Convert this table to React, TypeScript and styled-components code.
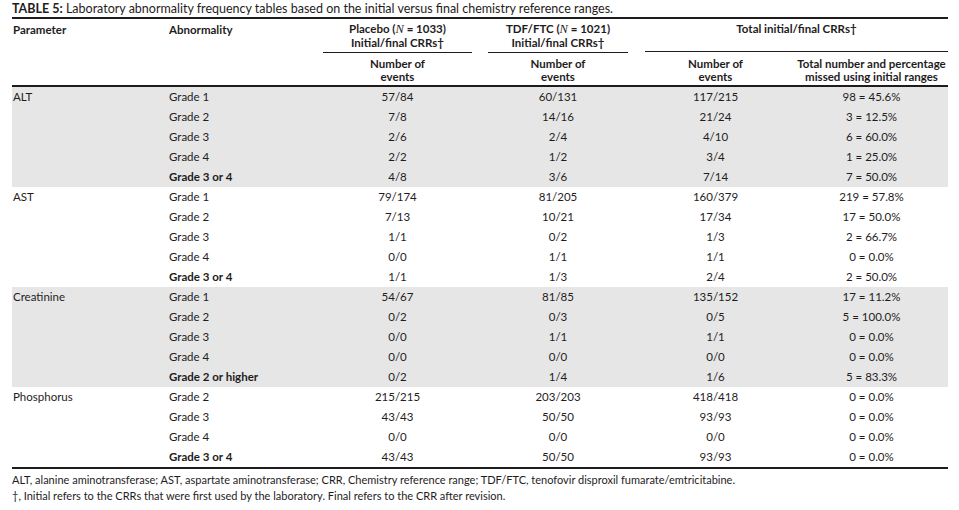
import React from "react";
import styled, { createGlobalStyle } from "styled-components";

const Global = createGlobalStyle`
  html, body { margin: 0; padding: 0; background: #ffffff; }
  body { font-family: Lato, "Open Sans", "Liberation Sans", sans-serif; color: #1f1c1d; }
`;

const COLS = "156px 147px 165px 156px 159px 153px";

const Page = styled.div`
  padding: 1px 11px 0 12px;
  width: 936px;
`;

const Title = styled.div`
  font-size: 12.5px;
  line-height: 15px;
  height: 16px;
  white-space: nowrap;
  b { font-weight: 700; }
`;

const Table = styled.div`
  border-top: 2px solid #1f1c1d;
  border-bottom: 2px solid #1f1c1d;
  font-size: 11.5px;
`;

const Head = styled.div`
  display: grid;
  grid-template-columns: ${COLS};
  grid-template-rows: auto auto;
  border-bottom: 2px solid #1f1c1d;
  font-weight: 700;
  line-height: 13px;
`;

const HeadLabel = styled.div<{ $col: number }>`
  grid-column: ${(p) => p.$col};
  grid-row: 1 / span 2;
  padding: 4px 0 0 1px;
  text-align: left;
`;

const GroupHead = styled.div<{ $col: string; $r?: number }>`
  grid-column: ${(p) => p.$col};
  grid-row: 1;
  padding: 3px ${(p) => p.$r ?? 8}px 0 ${(p) => (p.$r === 0 ? 9 : 8)}px;
`;

const GroupText = styled.div`
  text-align: center;
  padding-bottom: 3px;
  border-bottom: 1px solid #1f1c1d;
`;

const SubHead = styled.div<{ $col: number }>`
  grid-column: ${(p) => p.$col};
  grid-row: 2;
  text-align: center;
  padding: 4px 0 2px;
`;

const Ital = styled.i`
  font-family: "Liberation Serif", "DejaVu Serif", serif;
  font-style: italic;
  font-weight: 400;
  font-size: 12.5px;
`;

const Group = styled.div<{ $shaded: boolean }>`
  background: ${(p) => (p.$shaded ? "#e6e6e6" : "transparent")};
`;

const Row = styled.div`
  display: grid;
  grid-template-columns: ${COLS};
  height: 20px;
  line-height: 20px;
`;

const Cell = styled.div<{ $center?: boolean; $bold?: boolean }>`
  text-align: ${(p) => (p.$center ? "center" : "left")};
  padding-left: ${(p) => (p.$center ? 0 : 1)}px;
  font-weight: ${(p) => (p.$bold ? 700 : 400)};
  white-space: nowrap;
`;

const Notes = styled.div`
  font-size: 11px;
  line-height: 16px;
  padding-top: 3px;
`;

type R = [string, string, string, string, string, boolean?];

const groups: { name: string; shaded: boolean; rows: R[] }[] = [
  {
    name: "ALT",
    shaded: true,
    rows: [
      ["Grade 1", "57/84", "60/131", "117/215", "98 = 45.6%"],
      ["Grade 2", "7/8", "14/16", "21/24", "3 = 12.5%"],
      ["Grade 3", "2/6", "2/4", "4/10", "6 = 60.0%"],
      ["Grade 4", "2/2", "1/2", "3/4", "1 = 25.0%"],
      ["Grade 3 or 4", "4/8", "3/6", "7/14", "7 = 50.0%", true],
    ],
  },
  {
    name: "AST",
    shaded: false,
    rows: [
      ["Grade 1", "79/174", "81/205", "160/379", "219 = 57.8%"],
      ["Grade 2", "7/13", "10/21", "17/34", "17 = 50.0%"],
      ["Grade 3", "1/1", "0/2", "1/3", "2 = 66.7%"],
      ["Grade 4", "0/0", "1/1", "1/1", "0 = 0.0%"],
      ["Grade 3 or 4", "1/1", "1/3", "2/4", "2 = 50.0%", true],
    ],
  },
  {
    name: "Creatinine",
    shaded: true,
    rows: [
      ["Grade 1", "54/67", "81/85", "135/152", "17 = 11.2%"],
      ["Grade 2", "0/2", "0/3", "0/5", "5 = 100.0%"],
      ["Grade 3", "0/0", "1/1", "1/1", "0 = 0.0%"],
      ["Grade 4", "0/0", "0/0", "0/0", "0 = 0.0%"],
      ["Grade 2 or higher", "0/2", "1/4", "1/6", "5 = 83.3%", true],
    ],
  },
  {
    name: "Phosphorus",
    shaded: false,
    rows: [
      ["Grade 2", "215/215", "203/203", "418/418", "0 = 0.0%"],
      ["Grade 3", "43/43", "50/50", "93/93", "0 = 0.0%"],
      ["Grade 4", "0/0", "0/0", "0/0", "0 = 0.0%"],
      ["Grade 3 or 4", "43/43", "50/50", "93/93", "0 = 0.0%", true],
    ],
  },
];

export default function App() {
  return (
    <Page>
      <Global />
      <Title>
        <b>TABLE 5:</b> Laboratory abnormality frequency tables based on the initial versus final chemistry reference ranges.
      </Title>
      <Table>
        <Head>
          <HeadLabel $col={1}>Parameter</HeadLabel>
          <HeadLabel $col={2}>Abnormality</HeadLabel>
          <GroupHead $col="3">
            <GroupText>
              Placebo (<Ital>N</Ital> = 1033)
              <br />
              Initial/final CRRs†
            </GroupText>
          </GroupHead>
          <GroupHead $col="4">
            <GroupText>
              TDF/FTC (<Ital>N</Ital> = 1021)
              <br />
              Initial/final CRRs†
            </GroupText>
          </GroupHead>
          <GroupHead $col="5 / span 2" $r={0}>
            <GroupText>
              Total initial/final CRRs†
              <br />
              &nbsp;
            </GroupText>
          </GroupHead>
          <SubHead $col={3}>Number of<br />events</SubHead>
          <SubHead $col={4}>Number of<br />events</SubHead>
          <SubHead $col={5}>Number of<br />events</SubHead>
          <SubHead $col={6}>Total number and percentage<br />missed using initial ranges</SubHead>
        </Head>
        {groups.map((g) => (
          <Group key={g.name} $shaded={g.shaded}>
            {g.rows.map((r, i) => (
              <Row key={i}>
                <Cell>{i === 0 ? g.name : ""}</Cell>
                <Cell $bold={!!r[5]}>{r[0]}</Cell>
                <Cell $center>{r[1]}</Cell>
                <Cell $center>{r[2]}</Cell>
                <Cell $center>{r[3]}</Cell>
                <Cell $center>{r[4]}</Cell>
              </Row>
            ))}
          </Group>
        ))}
      </Table>
      <Notes>
        <div>ALT, alanine aminotransferase; AST, aspartate aminotransferase; CRR, Chemistry reference range; TDF/FTC, tenofovir disproxil fumarate/emtricitabine.</div>
        <div>†, Initial refers to the CRRs that were first used by the laboratory. Final refers to the CRR after revision.</div>
      </Notes>
    </Page>
  );
}
